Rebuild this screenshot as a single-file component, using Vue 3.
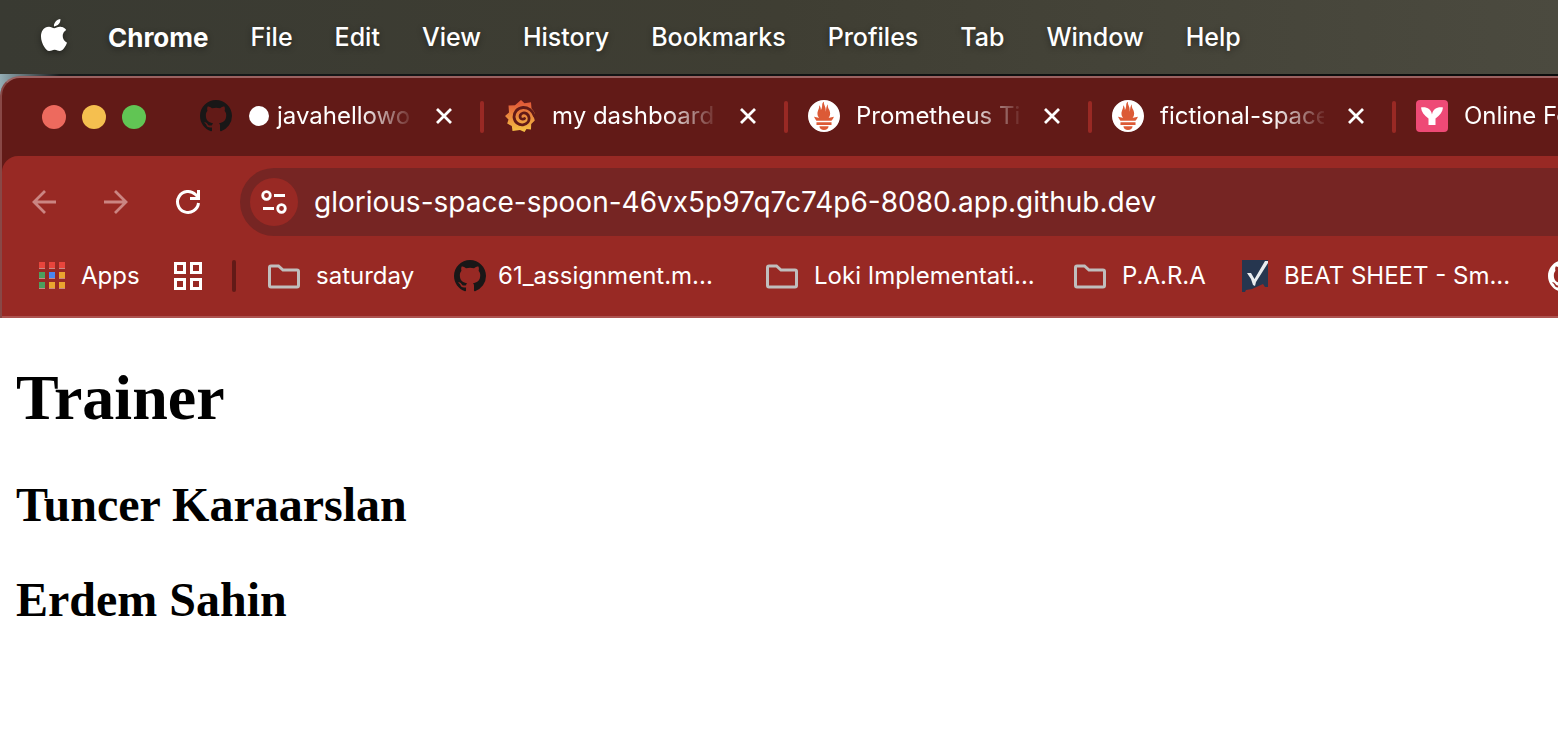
<script setup>
const menus = ['File', 'Edit', 'View', 'History', 'Bookmarks', 'Profiles', 'Tab', 'Window', 'Help']
const tabs = [
  { icon: 'github', title: 'javahelloworld', dot: true },
  { icon: 'grafana', title: 'my dashboard' },
  { icon: 'prometheus', title: 'Prometheus Time' },
  { icon: 'prometheus', title: 'fictional-space' },
  { icon: 'form', title: 'Online Form' }
]
const mark = 'M8 0C3.58 0 0 3.58 0 8c0 3.54 2.29 6.53 5.47 7.59.4.07.55-.17.55-.38 0-.19-.01-.82-.01-1.49-2.01.37-2.53-.49-2.69-.94-.09-.23-.48-.94-.82-1.13-.28-.15-.68-.52-.01-.53.63-.01 1.08.58 1.23.82.72 1.21 1.87.87 2.33.66.07-.52.28-.87.51-1.07-1.78-.2-3.64-.89-3.64-3.95 0-.87.31-1.59.82-2.15-.08-.2-.36-1.02.08-2.12 0 0 .67-.21 2.2.82.64-.18 1.32-.27 2-.27.68 0 1.36.09 2 .27 1.53-1.04 2.2-.82 2.2-.82.44 1.1.16 1.92.08 2.12.51.56.82 1.27.82 2.15 0 3.07-1.87 3.75-3.65 3.95.29.25.54.73.54 1.48 0 1.07-.01 1.93-.01 2.2 0 .21.15.46.55.38A8.013 8.013 0 0016 8c0-4.42-3.58-8-8-8z'
const folder = 'M1.5 23.5V5.500Q1.5 4 3 4H10.500L15 8H29Q30.500 8 30.500 9.500V23.500Q30.500 25 29 25H3Q1.5 25 1.5 23.500Z'
const appColors = ['#e8453c', '#e8453c', '#e8453c', '#4c9f5e', '#4a86f0', '#e9a52f', '#4c9f5e', '#e9a52f', '#e9a52f']
const url = 'glorious-space-spoon-46vx5p97q7c74p6-8080.app.github.dev'
</script>

<template>
  <div class="screen">
    <nav class="menubar" aria-label="Menu bar">
      <button class="menu apple" aria-label="Apple">
        <svg width="32" height="32" viewBox="0 0 24 24" fill="#fff"><path d="M12.152 6.896c-.948 0-2.415-1.078-3.960-1.040-2.040.027-3.910 1.183-4.961 3.014-2.117 3.675-.546 9.103 1.519 12.090 1.013 1.454 2.208 3.090 3.792 3.039 1.520-.065 2.090-.987 3.935-.987 1.831 0 2.350.987 3.960.948 1.637-.026 2.676-1.480 3.676-2.948 1.156-1.688 1.636-3.325 1.662-3.415-.039-.013-3.182-1.221-3.220-4.857-.026-3.040 2.480-4.494 2.597-4.559-1.429-2.090-3.623-2.324-4.390-2.376-2-.156-3.675 1.090-4.610 1.090zM15.530 3.830c.843-1.012 1.400-2.427 1.245-3.830-1.207.052-2.662.805-3.532 1.818-.780.896-1.454 2.338-1.273 3.714 1.338.104 2.715-.688 3.559-1.701" /></svg>
      </button>
      <button class="menu app-name">Chrome</button>
      <button v-for="m in menus" :key="m" class="menu">{{ m }}</button>
    </nav>

    <div class="desktop">
      <div class="window">
        <header class="tabstrip">
          <div class="lights">
            <button class="light close" aria-label="Close window"></button>
            <button class="light minimise" aria-label="Minimise window"></button>
            <button class="light maximise" aria-label="Maximise window"></button>
          </div>
          <div v-for="(t, i) in tabs" :key="i" class="tab">
            <svg v-if="t.icon === 'github'" class="icon" width="32" height="32" viewBox="0 0 16 16"><path :d="mark" fill="#191717" /></svg>
            <svg v-else-if="t.icon === 'grafana'" class="icon" width="32" height="32" viewBox="0 0 32 32">
              <defs><linearGradient id="sun" x1="0" y1="0" x2="0" y2="1"><stop offset="0.100" stop-color="#e25a38" /><stop offset="1" stop-color="#f5c344" /></linearGradient></defs>
              <path fill="url(#sun)" d="M17 0L20.500 3.300L27 2.200L27.500 8.500C30 11 31.300 13.500 31 16L29.500 16L30.800 20.500L27.200 24L27 29.500L22.500 29L20.500 32L16 30L8.500 31L7.800 26L3.200 23.500L4.500 19.500L1 16L5 12.500L4.500 5.500L11 5.200Z" />
              <path fill="none" stroke="#621a17" stroke-width="2.800" stroke-linecap="round" d="M30.500 16C28.500 10 23.500 7.300 19 7.500C13 8 10 12.500 10 17C10.500 22.500 15 25.300 19 24.800C23.500 24 25.500 21 25 17.500C24.500 14 21.500 12.500 19 13C16.500 13.500 15.500 16 16.500 18C17.500 19.500 19.500 19.500 20.500 18.500" />
            </svg>
            <svg v-else-if="t.icon === 'prometheus'" class="icon" width="32" height="32" viewBox="0 0 24 24">
              <circle cx="12" cy="12" r="11.500" fill="#dc5a36" />
              <path fill="#fff" d="M12 0C5.373 0 0 5.372 0 12c0 6.627 5.373 12 12 12s12-5.373 12-12c0-6.628-5.373-12-12-12zm0 22.460c-1.885 0-3.414-1.260-3.414-2.814h6.828c0 1.553-1.528 2.813-3.414 2.813zm5.640-3.745H6.360v-2.046h11.280v2.046zm-.040-3.098H6.391c-.037-.043-.075-.086-.111-.130-1.155-1.401-1.427-2.133-1.690-2.879-.005-.025 1.400.287 2.395.511 0 0 .513.119 1.262.255-.720-.843-1.147-1.915-1.147-3.010 0-2.406 1.845-4.508 1.180-6.207.648.053 1.340 1.367 1.387 3.422.689-.951.977-2.690.977-3.755 0-1.103.727-2.385 1.454-2.429-.648 1.069.168 1.984.894 4.256.272.854.237 2.290.447 3.201.070-1.892.395-4.652 1.595-5.605-.530 1.200.079 2.702.494 3.424.671 1.164 1.078 2.047 1.078 3.716a4.642 4.642 0 01-1.110 2.996c.792-.149 1.340-.283 1.340-.283l2.573-.502s-.374 1.538-1.810 3.019z" />
            </svg>
            <svg v-else class="icon" width="32" height="32" viewBox="0 0 32 32">
              <rect width="32" height="32" rx="4" fill="#ee4a76" />
              <path fill="#fff" d="M5 7.500C10.500 6.500 15 9 16 14.500C17 9 21.500 6.500 27 7.500C26.500 12 24 15 19.500 18.500V25H12.500V18.500C8 15 5.500 12 5 7.500Z" />
            </svg>
            <span class="title"><span v-if="t.dot" class="dot"></span>{{ t.title }}</span>
            <button class="close-tab" :aria-label="'Close ' + t.title">
              <svg width="16" height="16" viewBox="0 0 16 16"><path d="M1 1L15 15M15 1L1 15" stroke="#fff" stroke-width="2.800" /></svg>
            </button>
          </div>
        </header>

        <div class="chrome">
          <div class="toolbar">
            <button class="nav" aria-label="Back"><svg width="24" height="24" viewBox="0 0 24 24"><path d="M24 12H2M13 1L2 12L13 23" fill="none" stroke="#cb8582" stroke-width="2.800" /></svg></button>
            <button class="nav" aria-label="Forward"><svg width="24" height="24" viewBox="0 0 24 24"><path d="M0 12H22M11 1L22 12L11 23" fill="none" stroke="#cb8582" stroke-width="2.800" /></svg></button>
            <button class="nav" aria-label="Reload"><svg width="26" height="26" viewBox="0 0 26 26"><path d="M23.500 14A10.500 10.500 0 1 1 20.500 5.500L23.500 8.500M23.500 1V9.500H15" fill="none" stroke="#fff" stroke-width="3" /></svg></button>
            <div class="address">
              <button class="site" aria-label="Site information">
                <svg width="26" height="24" viewBox="0 0 26 24" fill="none" stroke="#fff" stroke-width="2.800"><circle cx="5.500" cy="5.500" r="3.800" /><path d="M13 5.500H24M2 18.500H13" /><circle cx="20.500" cy="18.500" r="3.800" /></svg>
              </button>
              <input class="url" aria-label="Address" :value="url" />
            </div>
          </div>
          <div class="bookmarks">
            <a class="mark apps" href="#">
              <svg width="26" height="28" viewBox="0 0 26 28">
                <g v-for="(c, i) in appColors" :key="i">
                  <rect :x="(i % 3) * 10" :y="Math.floor(i / 3) * 10" width="6" height="7" fill="#c98784" />
                  <rect :x="(i % 3) * 10" :y="Math.floor(i / 3) * 10" width="6" height="6" :fill="c" />
                </g>
              </svg>
              <span>Apps</span>
            </a>
            <button class="groups" aria-label="Tab groups">
              <svg width="28" height="28" viewBox="0 0 28 28" fill="none" stroke="#fff" stroke-width="3"><path d="M1.500 1.500H10.500V10.500H1.500ZM17.500 1.500H26.500V10.500H17.500ZM1.500 17.500H10.500V26.500H1.500ZM17.500 17.500H26.500V26.500H17.500Z" /></svg>
            </button>
            <span class="divider"></span>
            <a class="mark saturday" href="#"><svg class="folder" width="32" height="28" viewBox="0 0 32 28"><path :d="folder" /></svg><span>saturday</span></a>
            <a class="mark assignment" href="#"><svg width="32" height="32" viewBox="0 0 16 16"><path :d="mark" fill="#191717" /></svg><span>61_assignment.m...</span></a>
            <a class="mark loki" href="#"><svg class="folder" width="32" height="28" viewBox="0 0 32 28"><path :d="folder" /></svg><span>Loki Implementati...</span></a>
            <a class="mark para" href="#"><svg class="folder" width="32" height="28" viewBox="0 0 32 28"><path :d="folder" /></svg><span>P.A.R.A</span></a>
            <a class="mark beat" href="#">
              <svg width="26" height="32" viewBox="0 0 26 32"><path d="M0 0H26V27H23L21 24L10 29L4 30L3 32H0Z" fill="#26364f" /><path d="M5 13H9L12.500 19L23 1H26V3L14 22L13 26L11 25L9 19Z" fill="#e9ecef" /></svg>
              <span>BEAT SHEET - Sm...</span>
            </a>
            <a class="mark" href="#" aria-label="GitHub"><svg width="32" height="32" viewBox="0 0 16 16"><path :d="mark" fill="#fff" /></svg></a>
          </div>
        </div>
      </div>
    </div>

    <main class="page">
      <h1>Trainer</h1>
      <h2>Tuncer Karaarslan</h2>
      <h2>Erdem Sahin</h2>
    </main>
  </div>
</template>

<style>
body { background: #fff; overflow: hidden; }
</style>

<style scoped>
.screen { font-family: Inter, "Liberation Sans", sans-serif; color: #fff; overflow: hidden; }
button { border: 0; background: none; color: inherit; padding: 0; font: inherit; display: flex; align-items: center; justify-content: center; flex: none; }
svg { display: block; flex: none; }
.menubar { height: 74px; box-sizing: border-box; display: flex; align-items: center; gap: 42px; padding-left: 38px; font-size: 25px; font-weight: 500; background: linear-gradient(90deg, #393a32, #3f3e33 50%, #4b4a3f); }
.menu { text-shadow: 0 2px 6px rgba(0, 0, 0, 0.4); white-space: nowrap; }
.apple { margin-right: -4px; }
.apple svg { margin-bottom: 4px; filter: drop-shadow(0 2px 3px rgba(0, 0, 0, 0.4)); }
.app-name { font-size: 26px; font-weight: 700; }
.desktop { background: linear-gradient(90deg, #94adb5, #16191a 60px, #0b0c0c); padding-top: 2px; }
.window { border-top: 2px solid #9b6261; border-left: 2px solid #884846; border-radius: 20px 0 0 0; background: #621a17; overflow: hidden; }
.tabstrip { height: 78px; display: flex; align-items: center; padding-left: 40px; overflow: hidden; }
.lights { display: flex; gap: 16px; width: 158px; flex: none; }
.light { width: 24px; height: 24px; border-radius: 50%; }
.close { background: #ed6a5e; }
.minimise { background: #f5bf4f; }
.maximise { background: #61c554; }
.tab { width: 304px; height: 32px; flex: none; display: flex; align-items: center; box-sizing: border-box; position: relative; margin-bottom: 2px; }
.tab::after { content: ""; position: absolute; right: 20px; top: 1px; width: 4px; height: 32px; border-radius: 2px; background: #992924; }
.title { width: 164px; margin-left: 16px; overflow: hidden; white-space: nowrap; font-size: 24px; line-height: 32px; font-weight: 400; mask-image: linear-gradient(90deg, #000 112px, transparent 168px); }
.dot { display: inline-block; width: 20px; height: 20px; border-radius: 50%; background: #fff; vertical-align: -2px; margin: 0 8px 0 1px; }
.close-tab { width: 24px; height: 24px; margin-left: 20px; }
.chrome { background: #982924; border-bottom: 2px solid #ad5350; border-top-left-radius: 16px; }
.toolbar { height: 68px; padding: 12px 0 0 30px; display: flex; align-items: center; }
.nav { width: 24px; height: 24px; margin-right: 48px; }
.address { flex: 1; height: 68px; background: #762523; border-radius: 34px 0 0 34px; display: flex; align-items: center; padding-left: 10px; margin-left: -8px; }
.site { width: 48px; height: 48px; border-radius: 50%; background: #982924; }
.url { flex: 1; min-width: 0; border: 0; background: none; color: #fff; font: 400 28px Inter, "Liberation Sans", sans-serif; padding: 0; margin-left: 16px; outline: 0; }
.bookmarks { height: 80px; display: flex; align-items: center; font-size: 24px; font-weight: 400; padding-left: 37px; overflow: hidden; white-space: nowrap; }
.mark { display: flex; align-items: center; gap: 16px; color: #fff; text-decoration: none; flex: none; }
.mark span { padding-bottom: 2px; }
.apps { width: 135px; }
.groups { width: 28px; height: 28px; }
.divider { width: 4px; height: 32px; border-radius: 2px; background: #621a17; margin: 0 32px 0 30px; flex: none; }
.folder { fill: none; stroke: #c0bebd; stroke-width: 3; }
.saturday { width: 186px; }
.assignment { width: 312px; gap: 12px; }
.loki { width: 308px; }
.para { width: 168px; }
.beat { width: 306px; }
.page { background: #fff; color: #000; padding: 1px 16px; font-family: "Liberation Serif", "Times New Roman", serif; }
h1 { font-size: 64px; line-height: 74px; margin: 42px 0; }
h2 { font-size: 48px; line-height: 55px; margin: 40px 0; }
</style>
